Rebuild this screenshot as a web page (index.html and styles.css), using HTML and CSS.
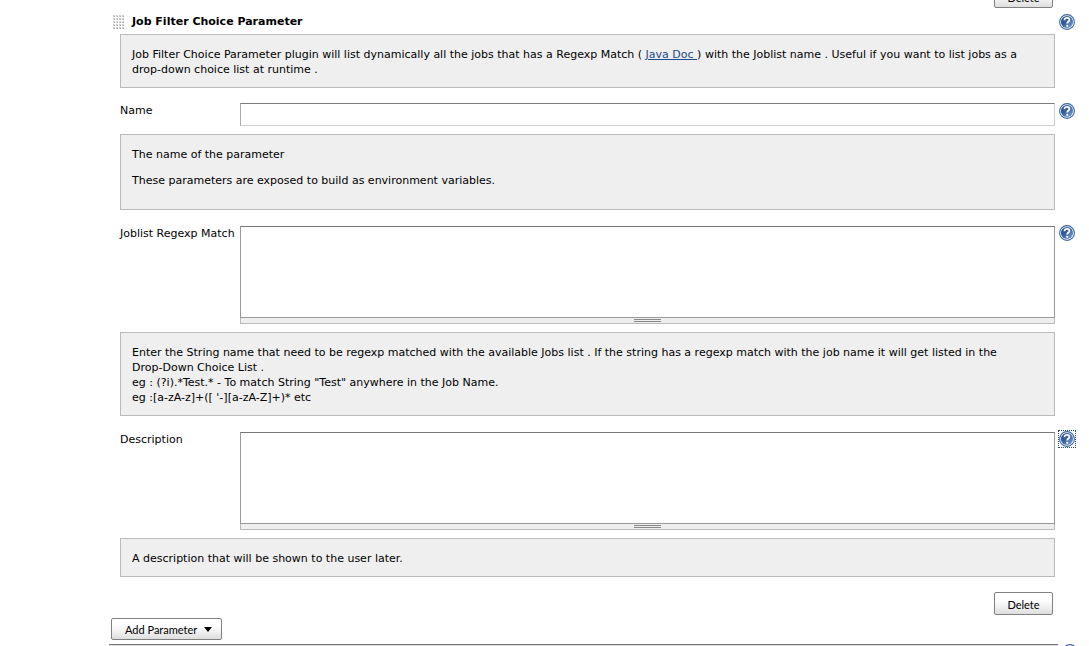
FILE: index.html
```html
<!DOCTYPE html>
<html lang="en">
<head>
<meta charset="utf-8">
<title>Job configuration</title>
<link rel="stylesheet" href="styles.css">
</head>
<body>
<svg class="defs" width="0" height="0" aria-hidden="true">
  <linearGradient id="ball" x1="0" y1="0" x2="1" y2="1">
    <stop offset="0" stop-color="#1f4785"/><stop offset=".45" stop-color="#34609f"/><stop offset="1" stop-color="#8aabd6"/>
  </linearGradient>
  <symbol id="help" viewBox="0 0 16 16">
    <circle cx="8" cy="8" r="7.4" fill="#fff" stroke="#3a65a2" stroke-width="1.1"/>
    <circle cx="8" cy="8" r="6.1" fill="url(#ball)"/>
    <path d="M5.5 6.2C5.5 4.5 6.6 3.8 8 3.8s2.4.8 2.4 2.1c0 1.6-2.2 1.7-2.2 3.6" fill="none" stroke="#fff" stroke-width="1.8"/>
    <circle cx="8.2" cy="11.8" r="1.1" fill="#fff"/>
  </symbol>
</svg>
<form class="config">
  <div class="actions actions-previous"><button type="button" class="button delete">Delete</button></div>

  <section class="parameter">
    <header class="row heading">
      <svg class="grip" width="12" height="14" aria-hidden="true">
        <defs><pattern id="dots" width="3" height="3" patternUnits="userSpaceOnUse"><rect width="2" height="2" fill="#d0d0d0"/><rect x="1" y="1" width="1" height="1" fill="#a8a8a8"/></pattern></defs>
        <rect width="11" height="14" fill="url(#dots)"/>
      </svg>
      <h2 class="title">Job Filter Choice Parameter</h2>
      <a class="help-link" href="#about" aria-label="Help"><svg><use href="#help"/></svg></a>
    </header>
    <div class="help" id="about">Job Filter Choice Parameter plugin will list dynamically all the jobs that has a Regexp Match ( <a class="doc-link" href="#doc">Java Doc&nbsp;</a>) with the Joblist name . Useful if you want to list jobs as a drop-down choice list at runtime .</div>

    <div class="row single">
      <label class="label" for="name">Name</label>
      <input class="text" id="name" type="text">
      <a class="help-link" href="#name-help" aria-label="Help for Name"><svg><use href="#help"/></svg></a>
    </div>
    <div class="help" id="name-help"><p>The name of the parameter</p><p>These parameters are exposed to build as environment variables.</p></div>

    <div class="row multi">
      <label class="label" for="regexp">Joblist Regexp Match</label>
      <div class="area"><textarea id="regexp"></textarea><div class="handle"></div></div>
      <a class="help-link" href="#regexp-help" aria-label="Help for Joblist Regexp Match"><svg><use href="#help"/></svg></a>
    </div>
    <div class="help" id="regexp-help">Enter the String name that need to be regexp matched with the available Jobs list . If the string has a regexp match with the job name it will get listed in the <span class="term">Drop-Down</span> Choice List .<br>eg : (?i).*Test.* - To match String "Test" anywhere in the Job Name.<br>eg :[a-zA-z]+([ '-][a-zA-Z]+)* etc</div>

    <div class="row multi">
      <label class="label" for="description">Description</label>
      <div class="area"><textarea id="description"></textarea><div class="handle"></div></div>
      <a class="help-link selected" href="#description-help" aria-label="Help for Description"><svg><use href="#help"/></svg></a>
    </div>
    <div class="help" id="description-help">A description that will be shown to the user later.</div>
  </section>

  <div class="actions"><button type="button" class="button delete">Delete</button></div>
  <button type="button" class="button add">Add Parameter <svg width="8" height="5" aria-hidden="true"><path d="M0 0h8L4 5z"/></svg></button>
  <footer class="next"><div class="next-line"></div><a class="help-link" href="#next" aria-label="Help"><svg><use href="#help"/></svg></a></footer>
</form>
</body>
</html>
```
FILE: styles.css
```css
* { box-sizing: border-box; }

body {
  margin: 0;
  height: 100vh;
  overflow: hidden;
  background: #fff;
  color: #000;
  font: 11px/15px Verdana, "DejaVu Sans", sans-serif;
}

.defs { position: absolute; }

.config { display: flow-root; }

.parameter { margin: 0 14px 0 120px; }

.row {
  display: grid;
  grid-template-columns: 120px minmax(0, 1fr) 16px;
  align-items: start;
  margin: 16px 0 8px;
}

.row.single { margin-top: 15px; }

.row.heading {
  grid-template-columns: 12px minmax(0, 1fr) 16px;
  margin: 6px 0 4px;
}

.grip { margin-left: -7px; margin-top: 1px; }

.title { margin: 0; font-size: 11px; line-height: 16px; font-weight: bold; }

.label { white-space: nowrap; }

.single .label { line-height: 16px; }

.help-link { display: block; width: 16px; height: 16px; }

.help-link svg { display: block; width: 16px; height: 16px; }

.multi .help-link { margin-top: -1px; }

.selected { outline: 1px dotted #1f4785; }

.help {
  margin-right: 20px;
  padding: 12px 11px 10px;
  border: 1px solid #bbb;
  background: #efefef;
}

.help p { margin: 0 0 11px; }

.term { white-space: nowrap; }

.doc-link { color: #204a87; }

.text {
  width: calc(100% - 4px);
  height: 23px;
  padding: 2px;
  border: 1px solid #ccc;
  border-top-color: #7c7c7c;
  border-left-color: #aaa;
  font: inherit;
  background: #fff;
}

.area { margin-right: 4px; }

.area textarea {
  display: block;
  width: 100%;
  height: 92px;
  padding: 2px;
  border: 1px solid #999;
  border-top-color: #777;
  border-radius: 0;
  resize: none;
  font: inherit;
}

.handle {
  display: flex;
  justify-content: center;
  height: 6px;
  border: 1px solid #bbb;
  border-top: 0;
  background: #eee;
}

.handle::before {
  content: "";
  box-sizing: border-box;
  width: 27px;
  height: 3px;
  margin-top: 1px;
  border: solid #888;
  border-width: 1px 0;
}

.actions {
  display: flex;
  justify-content: flex-end;
  margin: 15px 36px 3px 0;
}

.actions-previous {
  align-items: flex-end;
  height: 8px;
  margin: 0 36px 0 0;
  overflow: hidden;
}

.button {
  border: 1px solid #808080;
  border-radius: 2px;
  background: linear-gradient(#fff 30%, #f3f3f3 60%, #dedede);
  color: #000;
  font: 11px/15px "Lucida Grande", Lato, sans-serif;
}

.delete { flex: none; width: 59px; height: 23px; padding: 2px 0 0; }

.add {
  display: flex;
  align-items: center;
  gap: 7px;
  height: 22px;
  margin-left: 111px;
  padding: 1px 9px 0 13px;
}

.next { display: flex; justify-content: space-between; margin: 4px 11px 0 109px; }

.next-line { flex: 1; height: 4px; margin-right: 4px; border-top: 1px solid #777; background: #ddd; }
```
